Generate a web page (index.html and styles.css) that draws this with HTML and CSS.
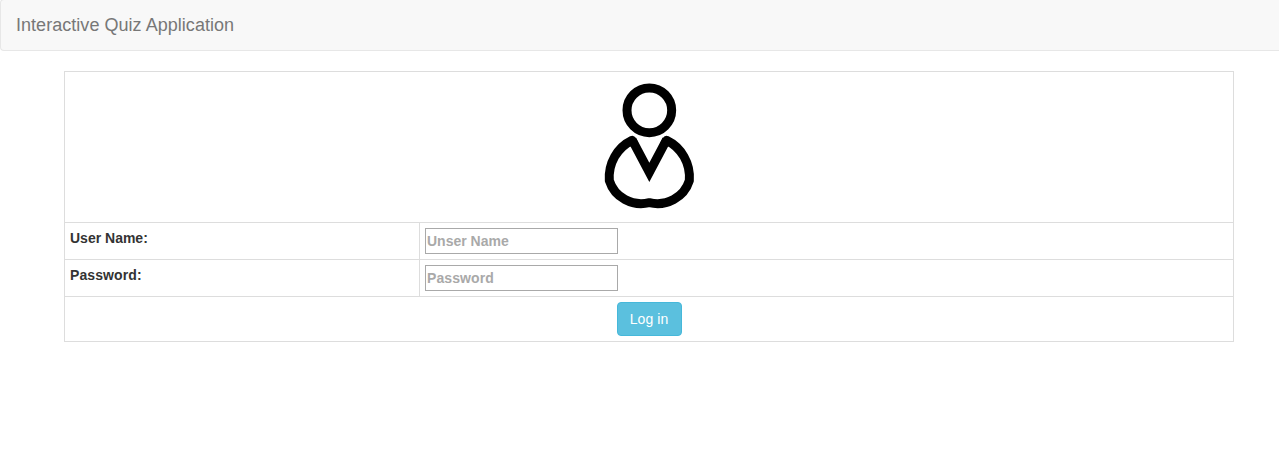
FILE: index.html
```html
<!DOCTYPE html>
<html lang="en">
<head>
<meta charset="utf-8">
<title>Interactive Quiz Application</title>
<link rel="stylesheet" href="styles.css">
</head>
<body>
<nav class="navbar"><span class="brand">Interactive Quiz Application</span></nav>
<form class="login">
  <div class="row avatar-row">
    <svg class="avatar" viewBox="-3 0 420 420" fill="none" stroke="#000" stroke-width="27">
      <circle cx="208" cy="100" r="67"/>
      <path stroke-linejoin="miter" d="M156 188 L208 286 L260 188"/>
      <path stroke-linejoin="round" d="M163 203 L156 190 C112 211 84 259 88 311 C104 362 157 389 208 377 C259 389 312 362 328 311 C332 259 304 211 260 190 L253 203"/>
    </svg>
  </div>
  <div class="row field-row">
    <label class="label" for="user">User Name:</label>
    <div class="cell"><input class="input" id="user" type="text" placeholder="Unser Name"></div>
  </div>
  <div class="row field-row">
    <label class="label label-password" for="pass">Password:</label>
    <div class="cell"><input class="input input-password" id="pass" type="password" placeholder="Password"></div>
  </div>
  <div class="row button-row"><button class="button" type="button">Log in</button></div>
</form>
</body>
</html>
```
FILE: styles.css
```css
* { box-sizing: border-box; }

body {
  margin: 0;
  background: #fff;
  color: #333;
  font: 14px/20px "Liberation Sans", Arial, sans-serif;
  overflow: hidden;
}

.navbar {
  display: flex;
  height: 52px;
  margin-top: -1px;
  padding: 15px;
  background: #f8f8f8;
  border: 1px solid #e7e7e7;
  border-right: 0;
  border-radius: 4px 0 0 4px;
}

.brand {
  color: #777;
  font-size: 18px;
  line-height: 20px;
  letter-spacing: 0.035px;
}

.login {
  width: 1170px;
  margin: 20px 0 0 64px;
  border: 1px solid #ddd;
  border-top: 0;
}

.row { border-top: 1px solid #ddd; }

.avatar-row {
  display: flex;
  justify-content: center;
  height: 151px;
  padding: 5px;
}

.avatar {
  width: 140px;
  height: 140px;
}

.field-row {
  display: grid;
  grid-template-columns: 354px 1fr;
  height: 37px;
}

.label {
  padding: 5px;
  font-weight: bold;
}

.label-password,
.input-password::placeholder {
  letter-spacing: 0.1px;
}

.cell {
  display: flex;
  padding: 5px;
  border-left: 1px solid #ddd;
}

.input {
  width: 193px;
  height: 26px;
  padding: 1px;
  border: 1px solid #a9a9a9;
  border-radius: 0;
  background: #fff;
  font: bold 14px/20px "Liberation Sans", Arial, sans-serif;
}

.input::placeholder {
  color: #a9a9a9;
  opacity: 1;
}

.button-row {
  display: flex;
  justify-content: center;
  height: 45px;
  padding: 5px;
}

.button {
  width: 65px;
  height: 34px;
  padding: 6px 0;
  border: 1px solid #46b8da;
  border-radius: 4px;
  background: #5bc0de;
  color: #fff;
  font: 14px/20px "Liberation Sans", Arial, sans-serif;
  letter-spacing: 0.1px;
}
```
